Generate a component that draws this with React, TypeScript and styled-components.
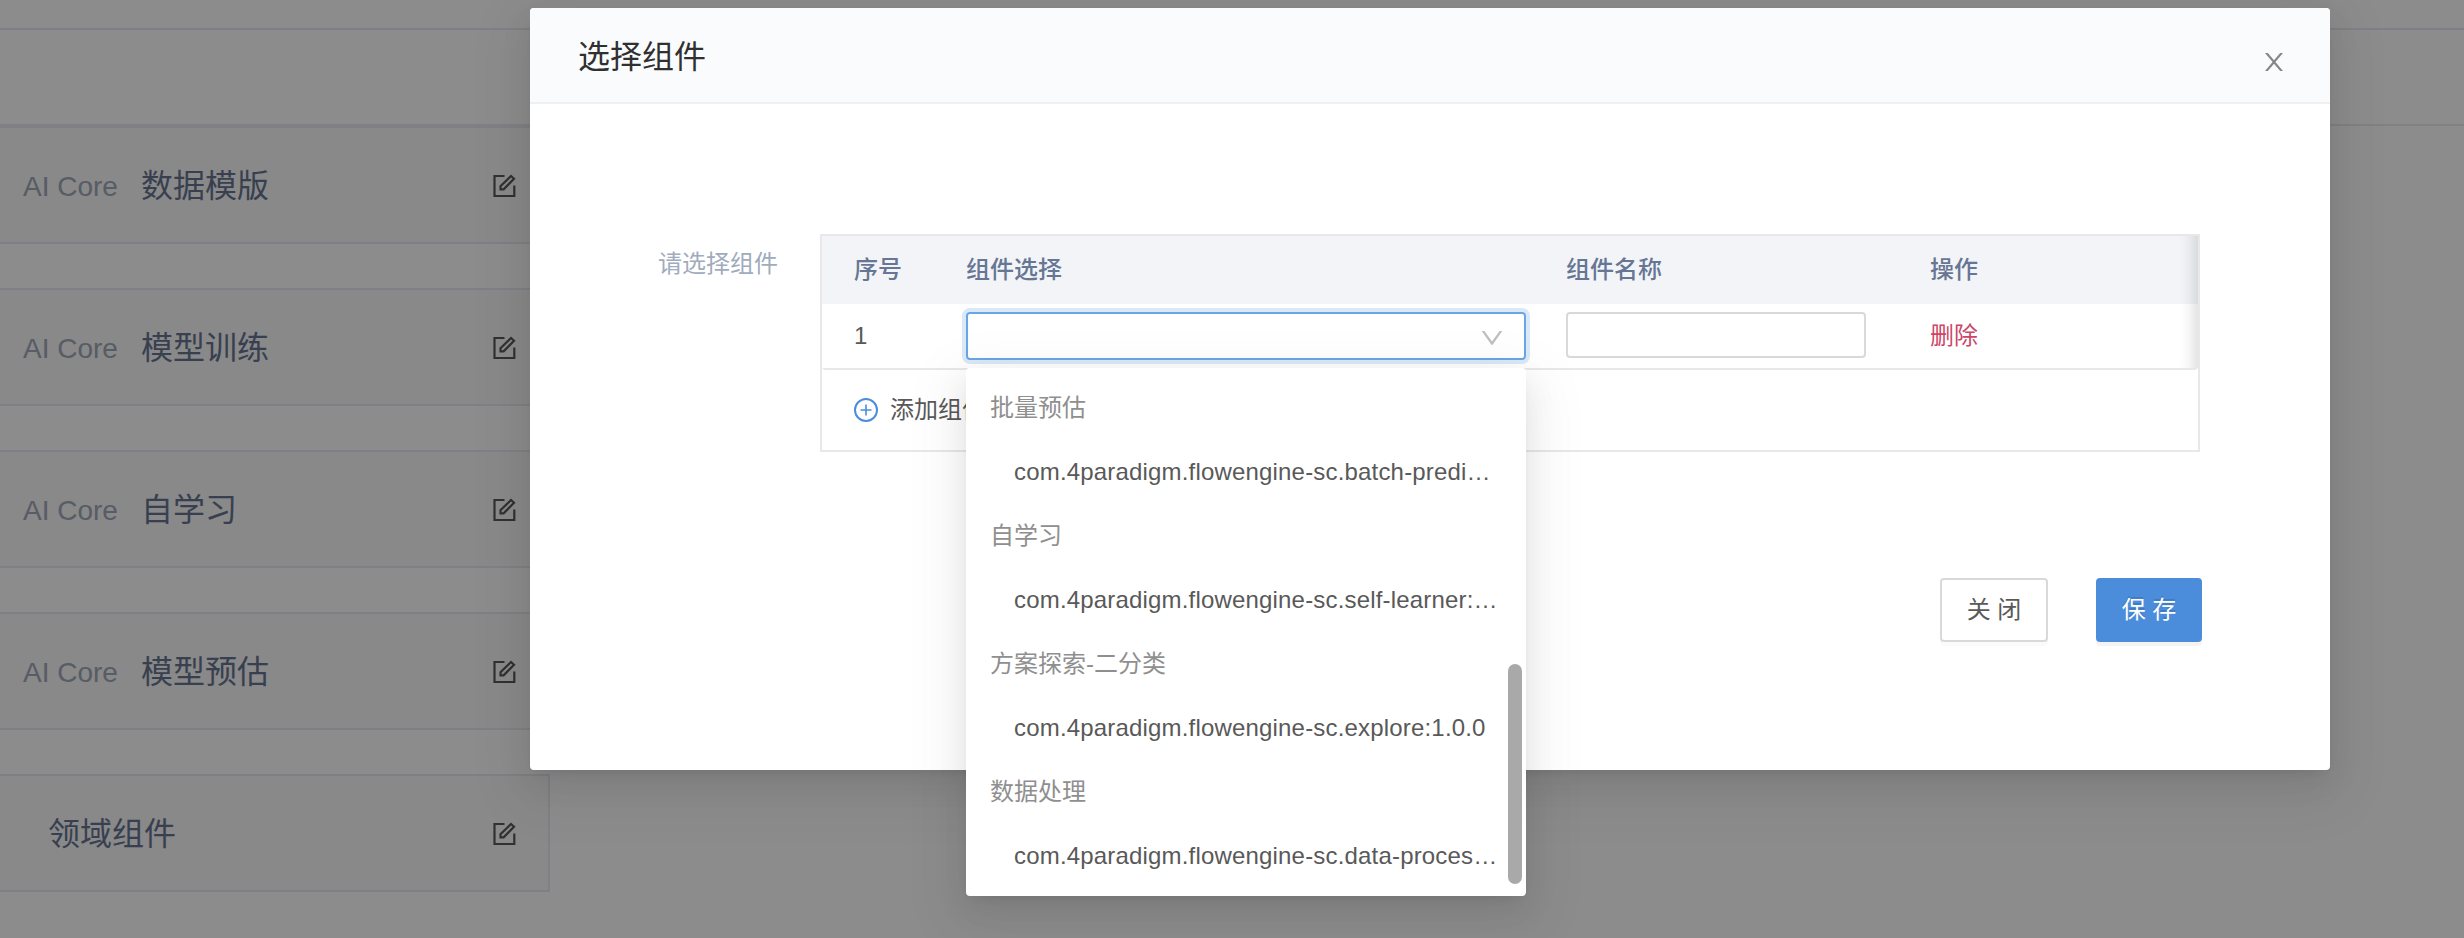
import React from 'react';
import styled, { createGlobalStyle } from 'styled-components';

const GlobalStyle = createGlobalStyle`
  *, *::before, *::after { box-sizing: border-box; }
  html, body { margin: 0; background: #fff; }
  body {
    font-family: "Liberation Sans", "Noto Sans CJK SC", sans-serif;
    font-size: 24px;
    color: #595959;
    overflow: hidden;
  }
`;

const Page = styled.div`
  position: relative;
  width: 2464px;
  height: 938px;
  overflow: hidden;
`;

const TopStrip = styled.div`
  height: 30px;
  border-bottom: 2px solid #e8e8f3;
`;

const TitleStrip = styled.div`
  height: 96px;
  border-bottom: 2px solid #ebebeb;
`;

const CardList = styled.div`
  display: flex;
  flex-direction: column;
  gap: 44px;
  width: 550px;
`;

const Card = styled.div<{ $indent: number }>`
  display: flex;
  align-items: center;
  height: 118px;
  padding: 2px 32px 0 ${(p) => p.$indent}px;
  background: #f9f9f9;
  border: 2px solid #e8e8f3;
  border-left: 0;
`;

const CardPrefix = styled.span`
  width: 118px;
  font-size: 28px;
  line-height: 40px;
  color: #a0a8b8;
  padding-top: 2px;
`;

const CardTitle = styled.span`
  flex: 1;
  font-size: 32px;
  line-height: 48px;
  color: #667693;
`;

const Mask = styled.div`
  position: absolute;
  inset: 0;
  background: rgba(0, 0, 0, 0.45);
`;

const floatShadow = `0 6px 12px -8px rgba(0,0,0,.12), 0 12px 32px 0 rgba(0,0,0,.08), 0 18px 56px 16px rgba(0,0,0,.05)`;

const Modal = styled.div`
  position: absolute;
  left: 530px;
  top: 8px;
  width: 1800px;
  height: 762px;
  background: #fff;
  border-radius: 4px;
  box-shadow: ${floatShadow};
`;

const ModalHeader = styled.div`
  display: flex;
  align-items: center;
  justify-content: space-between;
  height: 96px;
  padding: 0 44px 0 48px;
  background: #fafbfd;
  border-bottom: 2px solid #f0f0f0;
  border-radius: 4px 4px 0 0;
`;

const ModalTitle = styled.div`
  padding-top: 4px;
  font-size: 32px;
  line-height: 48px;
  color: #303030;
`;

const CloseButton = styled.div`
  display: flex;
  margin-top: 14px;
`;

const FormRow = styled.div`
  display: flex;
  padding: 130px 130px 0 128px;
`;

const Label = styled.div`
  width: 162px;
  padding-top: 12px;
  line-height: 36px;
  color: #a0abbd;
`;

const Table = styled.div`
  width: 1380px;
  border: 2px solid #e8e8e8;
`;

const TableScroll = styled.div`
  position: relative;
  border-bottom: 2px solid #e8e8e8;
  border-radius: 0 0 4px 4px;

  &::after {
    content: '';
    position: absolute;
    top: 0;
    right: 0;
    bottom: 0;
    width: 60px;
    box-shadow: inset -20px 0 16px -16px rgba(0, 0, 0, 0.15);
  }
`;

const TableRow = styled.div<{ $head?: boolean }>`
  display: grid;
  grid-template-columns: 112px 600px 364px 1fr;
  align-items: center;
  height: ${(p) => (p.$head ? 68 : 64)}px;
  padding-left: 32px;
  background: ${(p) => (p.$head ? '#f2f4f8' : '#fff')};
  color: ${(p) => (p.$head ? '#667693' : '#595959')};
  font-weight: ${(p) => (p.$head ? 500 : 400)};
  line-height: 36px;
`;

const Select = styled.div`
  display: flex;
  align-items: center;
  justify-content: flex-end;
  width: 560px;
  height: 48px;
  padding-right: 20px;
  border: 2px solid #69a6e5;
  border-radius: 4px;
  box-shadow: 0 0 0 4px #dbe8f8;
`;

const NameInput = styled.input`
  display: block;
  width: 300px;
  height: 46px;
  margin-bottom: 2px;
  border: 2px solid #d9d9d9;
  border-radius: 4px;
  background: #fff;
  outline: none;
`;

const DeleteLink = styled.span`
  color: #cc4668;
`;

const AddRow = styled.div`
  display: flex;
  align-items: center;
  gap: 12px;
  height: 80px;
  padding-left: 32px;
  line-height: 36px;
`;

const Footer = styled.div`
  display: flex;
  justify-content: flex-end;
  gap: 48px;
  padding: 126px 128px 0 0;
`;

const Button = styled.button<{ $primary?: boolean }>`
  width: ${(p) => (p.$primary ? 106 : 108)}px;
  height: 64px;
  padding: 0 0 5px;
  font: inherit;
  white-space: nowrap;
  border-radius: 4px;
  border: 2px solid ${(p) => (p.$primary ? '#4b8ddb' : '#d9d9d9')};
  background: ${(p) => (p.$primary ? '#4b8ddb' : '#fff')};
  color: ${(p) => (p.$primary ? '#fff' : '#595959')};
  text-shadow: ${(p) => (p.$primary ? '0 -2px 0 rgba(0,0,0,.12)' : 'none')};
  box-shadow: 0 4px 0 rgba(0, 0, 0, ${(p) => (p.$primary ? 0.045 : 0.015)});
`;

const Dropdown = styled.div`
  position: absolute;
  left: 966px;
  top: 368px;
  width: 560px;
  height: 528px;
  padding: 8px 0;
  background: #fff;
  border-radius: 4px;
  box-shadow: ${floatShadow};
`;

const GroupTitle = styled.div`
  height: 64px;
  padding-left: 24px;
  line-height: 64px;
  color: #8f8f8f;
`;

const Option = styled.div`
  height: 64px;
  padding-left: 48px;
  line-height: 64px;
  letter-spacing: 0.18px;
  white-space: nowrap;
  color: #595959;
`;

const ScrollThumb = styled.div`
  position: absolute;
  right: 4px;
  bottom: 12px;
  width: 14px;
  height: 220px;
  border-radius: 7px;
  background: #a9a9a9;
`;

const EditIcon = () => (
  <svg width="24" height="24" viewBox="0 0 24 24" fill="none" stroke="#595959" strokeWidth="2.2">
    <path d="M12.5 2H2.5V22H22.3V11.5" />
    <path d="M8.5 15.3V12.2L19 2L22 4.8L11.6 15.3Z" />
  </svg>
);

const CloseIcon = () => (
  <svg width="24" height="24" viewBox="0 0 24 24" fill="#868686">
    <path d="M3 3H5.8L12 10.2L18.2 3H21L13.4 12L21 21H18.2L12 13.8L5.8 21H3L10.6 12Z" />
  </svg>
);

const ChevronIcon = () => (
  <svg width="24" height="24" viewBox="0 0 24 24" fill="#bfbfbf">
    <path d="M1.7 7H4.4L12 17.6L19.6 7H22.3L12.8 20.6Q12 21.4 11.2 20.6Z" />
  </svg>
);

const PlusCircleIcon = () => (
  <svg width="24" height="24" viewBox="0 0 24 24" fill="none" stroke="#4b8ddb" strokeWidth="2">
    <circle cx="12" cy="12" r="11" />
    <path d="M12 6.5V17.5M6.5 12H17.5" strokeWidth="1.6" />
  </svg>
);

const cards = [
  { prefix: 'AI Core', title: '数据模版' },
  { prefix: 'AI Core', title: '模型训练' },
  { prefix: 'AI Core', title: '自学习' },
  { prefix: 'AI Core', title: '模型预估' },
  { prefix: '', title: '领域组件' },
];

const groups = [
  { name: '批量预估', option: 'com.4paradigm.flowengine-sc.batch-predi…' },
  { name: '自学习', option: 'com.4paradigm.flowengine-sc.self-learner:…' },
  { name: '方案探索-二分类', option: 'com.4paradigm.flowengine-sc.explore:1.0.0' },
  { name: '数据处理', option: 'com.4paradigm.flowengine-sc.data-proces…' },
];

export default function App() {
  return (
    <Page>
      <GlobalStyle />
      <TopStrip />
      <TitleStrip />
      <CardList>
        {cards.map((c) => (
          <Card key={c.title} $indent={c.prefix ? 23 : 48}>
            {c.prefix && <CardPrefix>{c.prefix}</CardPrefix>}
            <CardTitle>{c.title}</CardTitle>
            <EditIcon />
          </Card>
        ))}
      </CardList>
      <Mask />
      <Modal>
        <ModalHeader>
          <ModalTitle>选择组件</ModalTitle>
          <CloseButton><CloseIcon /></CloseButton>
        </ModalHeader>
        <FormRow>
          <Label>请选择组件</Label>
          <Table>
            <TableScroll>
              <TableRow $head>
                <span>序号</span>
                <span>组件选择</span>
                <span>组件名称</span>
                <span>操作</span>
              </TableRow>
              <TableRow>
                <span>1</span>
                <Select><ChevronIcon /></Select>
                <NameInput />
                <DeleteLink>删除</DeleteLink>
              </TableRow>
            </TableScroll>
            <AddRow>
              <PlusCircleIcon />
              <span>添加组件</span>
            </AddRow>
          </Table>
        </FormRow>
        <Footer>
          <Button>关 闭</Button>
          <Button $primary>保 存</Button>
        </Footer>
      </Modal>
      <Dropdown>
        {groups.map((g) => (
          <React.Fragment key={g.name}>
            <GroupTitle>{g.name}</GroupTitle>
            <Option>{g.option}</Option>
          </React.Fragment>
        ))}
        <ScrollThumb />
      </Dropdown>
    </Page>
  );
}
